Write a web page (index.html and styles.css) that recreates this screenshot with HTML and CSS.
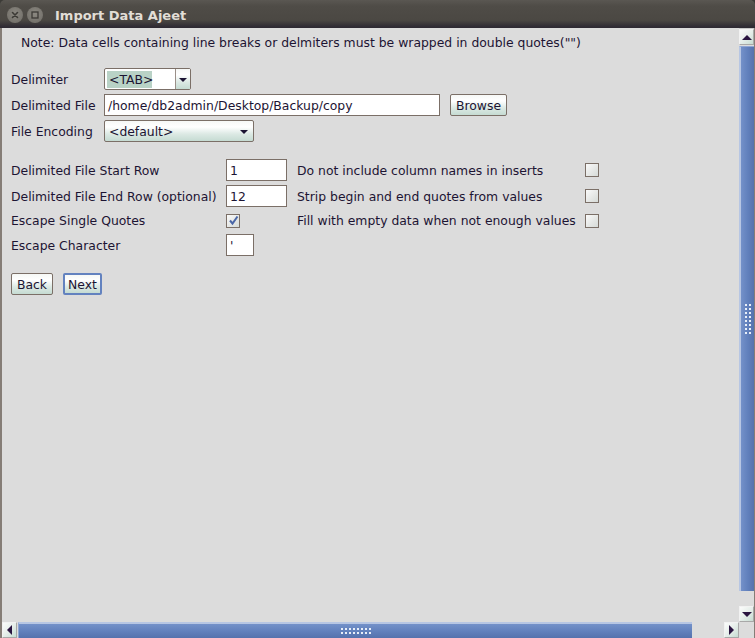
FILE: index.html
```html
<!DOCTYPE html>
<html>
<head>
<meta charset="utf-8">
<link rel="stylesheet" href="styles.css">
</head>
<body>
<div class="window">
  <div class="titlebar">
    <span class="tbtn close"><svg width="16" height="16" viewBox="0 0 16 16"><path d="M5.5 5.5 L10.5 10.5 M10.5 5.5 L5.5 10.5" stroke="#3c3a36" stroke-width="1.6" stroke-linecap="round"/></svg></span>
    <span class="tbtn max"><svg width="16" height="16" viewBox="0 0 16 16"><rect x="5" y="5" width="6" height="6" fill="none" stroke="#3c3a36" stroke-width="1.3"/></svg></span>
    <span class="title">Import Data Ajeet</span>
  </div>
  <div class="frame">
    <div class="upper">
      <div class="main">
        <div class="note">Note: Data cells containing line breaks or delmiters must be wrapped in double quotes("")</div>
        <div class="grid1">
          <label class="lbl">Delimiter</label>
          <div class="combo edit">
            <div class="combo-text"><span class="sel">&lt;TAB&gt;</span></div>
            <div class="combo-btn"><span class="tri-down"></span></div>
          </div>
          <label class="lbl">Delimited File</label>
          <div class="row-inline">
            <div class="field wide">/home/db2admin/Desktop/Backup/copy</div>
            <button class="btn browse">Browse</button>
          </div>
          <label class="lbl">File Encoding</label>
          <div class="combo plain">
            <span class="combo-val">&lt;default&gt;</span>
            <span class="tri-down"></span>
          </div>
        </div>
        <div class="grid2">
          <label class="lbl">Delimited File Start Row</label>
          <div class="field num">1</div>
          <label class="lbl">Do not include column names in inserts</label>
          <span class="check"></span>

          <label class="lbl">Delimited File End Row (optional)</label>
          <div class="field num">12</div>
          <label class="lbl">Strip begin and end quotes from values</label>
          <span class="check"></span>

          <label class="lbl">Escape Single Quotes</label>
          <span class="check on"><svg width="11" height="11" viewBox="0 0 11 11"><path d="M2 5.5 L4.5 8.5 L9.5 1.5" fill="none" stroke="#4a66a6" stroke-width="2"/></svg></span>
          <label class="lbl">Fill with empty data when not enough values</label>
          <span class="check"></span>

          <label class="lbl">Escape Character</label>
          <div class="field esc">'</div>
          <span></span>
          <span></span>
        </div>
        <div class="buttons">
          <button class="btn back">Back</button>
          <button class="btn next">Next</button>
        </div>
      </div>
      <div class="vscroll">
        <div class="arrow"><span class="tri-up"></span></div>
        <div class="vtrack"><div class="vthumb"><span class="grip vgrip"></span></div></div>
        <div class="arrow"><span class="tri-down big"></span></div>
      </div>
    </div>
    <div class="lower">
      <div class="hscroll">
        <div class="arrow"><span class="tri-left"></span></div>
        <div class="htrack"><div class="hthumb"><span class="grip hgrip"></span></div></div>
        <div class="arrow"><span class="tri-right"></span></div>
      </div>
      <div class="corner"></div>
    </div>
  </div>
</div>
</body>
</html>
```
FILE: styles.css
```css
* { box-sizing: border-box; }
html, body { margin: 0; padding: 0; }
body {
  width: 755px;
  height: 638px;
  overflow: hidden;
  background: #3c3b37;
  font-family: "DejaVu Sans", sans-serif;
  font-size: 12.4px;
  color: #1c1433;
}
.window {
  width: 755px;
  height: 638px;
  display: flex;
  flex-direction: column;
}
.titlebar {
  height: 28px;
  flex: none;
  display: flex;
  align-items: center;
  padding-left: 7px;
  background: linear-gradient(#5a5752 0px, #4f4c47 6px, #4b4843 20px, #2e2a33 27px);
  border-radius: 5px 5px 0 0;
}
.tbtn {
  width: 16px;
  height: 16px;
  border-radius: 50%;
  background: radial-gradient(circle at 50% 40%, #8b8881, #6d6a64);
  display: flex;
  margin-right: 4px;
  margin-top: 2px;
}
.title {
  margin-left: 8px;
  font-family: "DejaVu Sans", sans-serif;
  font-weight: bold;
  font-size: 13px;
  color: #e2ded6;
  margin-top: 2px;
}
.frame {
  flex: 1;
  display: flex;
  flex-direction: column;
  background: #dcdcdc;
  border-left: 2px solid #857d76;
  border-right: 1px solid #857d76;
}
.upper {
  flex: 1;
  display: flex;
  min-height: 0;
}
.main {
  flex: 1;
  padding: 7px 0 0 9px;
}
.note {
  height: 16px;
  line-height: 16px;
  margin-left: 10px;
}
.lbl {
  display: flex;
  align-items: center;
  white-space: nowrap;
}
.grid1 {
  margin-top: 17px;
  display: grid;
  grid-template-columns: 93px auto;
  grid-template-rows: 22px 22px 22px;
  row-gap: 4px;
}
.grid1 > * { justify-self: start; }
.row-inline { display: flex; }
.field {
  height: 22px;
  background: #fff;
  border: 1px solid #7b6f67;
  padding-left: 3px;
  display: flex;
  align-items: center;
  white-space: nowrap;
}
.field.wide { width: 336px; }
.field.num { width: 61px; }
.field.esc { width: 28px; }
.btn {
  font-family: "DejaVu Sans", sans-serif;
  font-size: 12.4px;
  color: #1c1433;
  height: 22px;
  padding: 0;
  border: 1px solid #7b6f67;
  border-radius: 2px;
  background: linear-gradient(#f6f8f6, #ffffff 30%, #dce9e4 65%, #c5dbd2);
}
.browse { width: 57px; margin-left: 10px; }
.combo {
  height: 22px;
  border: 1px solid #7b6f67;
  border-radius: 2px;
  display: flex;
  align-items: center;
}
.combo.edit {
  width: 87px;
  background: #fff;
}
.combo-text {
  flex: 1;
  padding-left: 2px;
  display: flex;
  align-items: center;
}
.sel {
  background: #b9d2c6;
  padding: 0 2px;
  line-height: 17px;
  display: inline-block;
  width: 45px;
}
.combo-btn {
  width: 15px;
  height: 20px;
  border-left: 1px solid #9a8f88;
  background: linear-gradient(#f6f8f6, #ffffff 30%, #dce9e4 65%, #c5dbd2);
  display: flex;
  align-items: center;
  justify-content: center;
}
.combo.plain {
  width: 150px;
  padding: 0 5px 0 4px;
  justify-content: space-between;
  background: linear-gradient(#f6f8f6, #ffffff 30%, #dce9e4 65%, #c5dbd2);
}
.tri-down {
  width: 0;
  height: 0;
  border-left: 4px solid transparent;
  border-right: 4px solid transparent;
  border-top: 4px solid #1c1433;
  margin-top: 2px;
}
.tri-up {
  width: 0;
  height: 0;
  border-left: 5px solid transparent;
  border-right: 5px solid transparent;
  border-bottom: 5px solid #2a1540;
}
.tri-down.big {
  border-left-width: 5px;
  border-right-width: 5px;
  border-top: 5px solid #2a1540;
  margin-top: 0;
}
.tri-left {
  width: 0;
  height: 0;
  border-top: 5px solid transparent;
  border-bottom: 5px solid transparent;
  border-right: 5px solid #2a1540;
}
.tri-right {
  width: 0;
  height: 0;
  border-top: 5px solid transparent;
  border-bottom: 5px solid transparent;
  border-left: 5px solid #2a1540;
}
.grid2 {
  margin-top: 17px;
  display: grid;
  grid-template-columns: 215px 71px 288px 14px;
  grid-template-rows: 22px 22px 19px 22px;
  row-gap: 4px;
  align-items: center;
}
.grid2 > .lbl { height: 100%; }
.check {
  width: 14px;
  height: 14px;
  border: 1px solid #7b6f67;
  background: linear-gradient(135deg, #fafafa, #e4e6e4 60%, #d6dbd8);
  display: flex;
  align-items: center;
  justify-content: center;
}
.buttons {
  margin-top: 17px;
  display: flex;
  gap: 10px;
}
.back { width: 42px; }
.next { width: 39px; border: 2px solid #6382bf; }
.vscroll {
  width: 15px;
  display: flex;
  flex-direction: column;
  border-top: 1px solid #c8c8c8;
}
.arrow {
  flex: none;
  width: 15px;
  height: 16px;
  border: 1px solid #f2f2f2;
  border-right-color: #a8a8a8;
  border-bottom-color: #a8a8a8;
  background: linear-gradient(135deg, #fbfcfb, #e6eeea 50%, #c6dcd2);
  display: flex;
  align-items: center;
  justify-content: center;
}
.vtrack {
  flex: 1;
  padding: 1px 0 15px 0;
  display: flex;
}
.vthumb {
  flex: 1;
  border-left: 2px solid #b7c6e3;
  border-top: 1px solid #8fa6d4;
  background: linear-gradient(90deg, #7491c9, #6281bd 50%, #5572ad);
  display: flex;
  align-items: center;
  justify-content: center;
}
.grip {
  display: block;
  background-image: radial-gradient(circle, #e8eef8 0.9px, transparent 1.2px);
  background-size: 4px 4px;
}
.vgrip { width: 8px; height: 32px; }
.hgrip { width: 32px; height: 8px; }
.lower {
  height: 16px;
  flex: none;
  display: flex;
}
.hscroll {
  flex: 1;
  display: flex;
}
.hscroll .arrow { width: 15px; height: 16px; }
.htrack {
  flex: 1;
  padding: 0 32px 0 1px;
  display: flex;
}
.hthumb {
  flex: 1;
  border-top: 2px solid #b7c6e3;
  border-left: 1px solid #8fa6d4;
  background: linear-gradient(#7491c9, #6281bd 50%, #5572ad);
  display: flex;
  align-items: center;
  justify-content: center;
}
.corner {
  width: 15px;
  background: #dcdcdc;
}
```
